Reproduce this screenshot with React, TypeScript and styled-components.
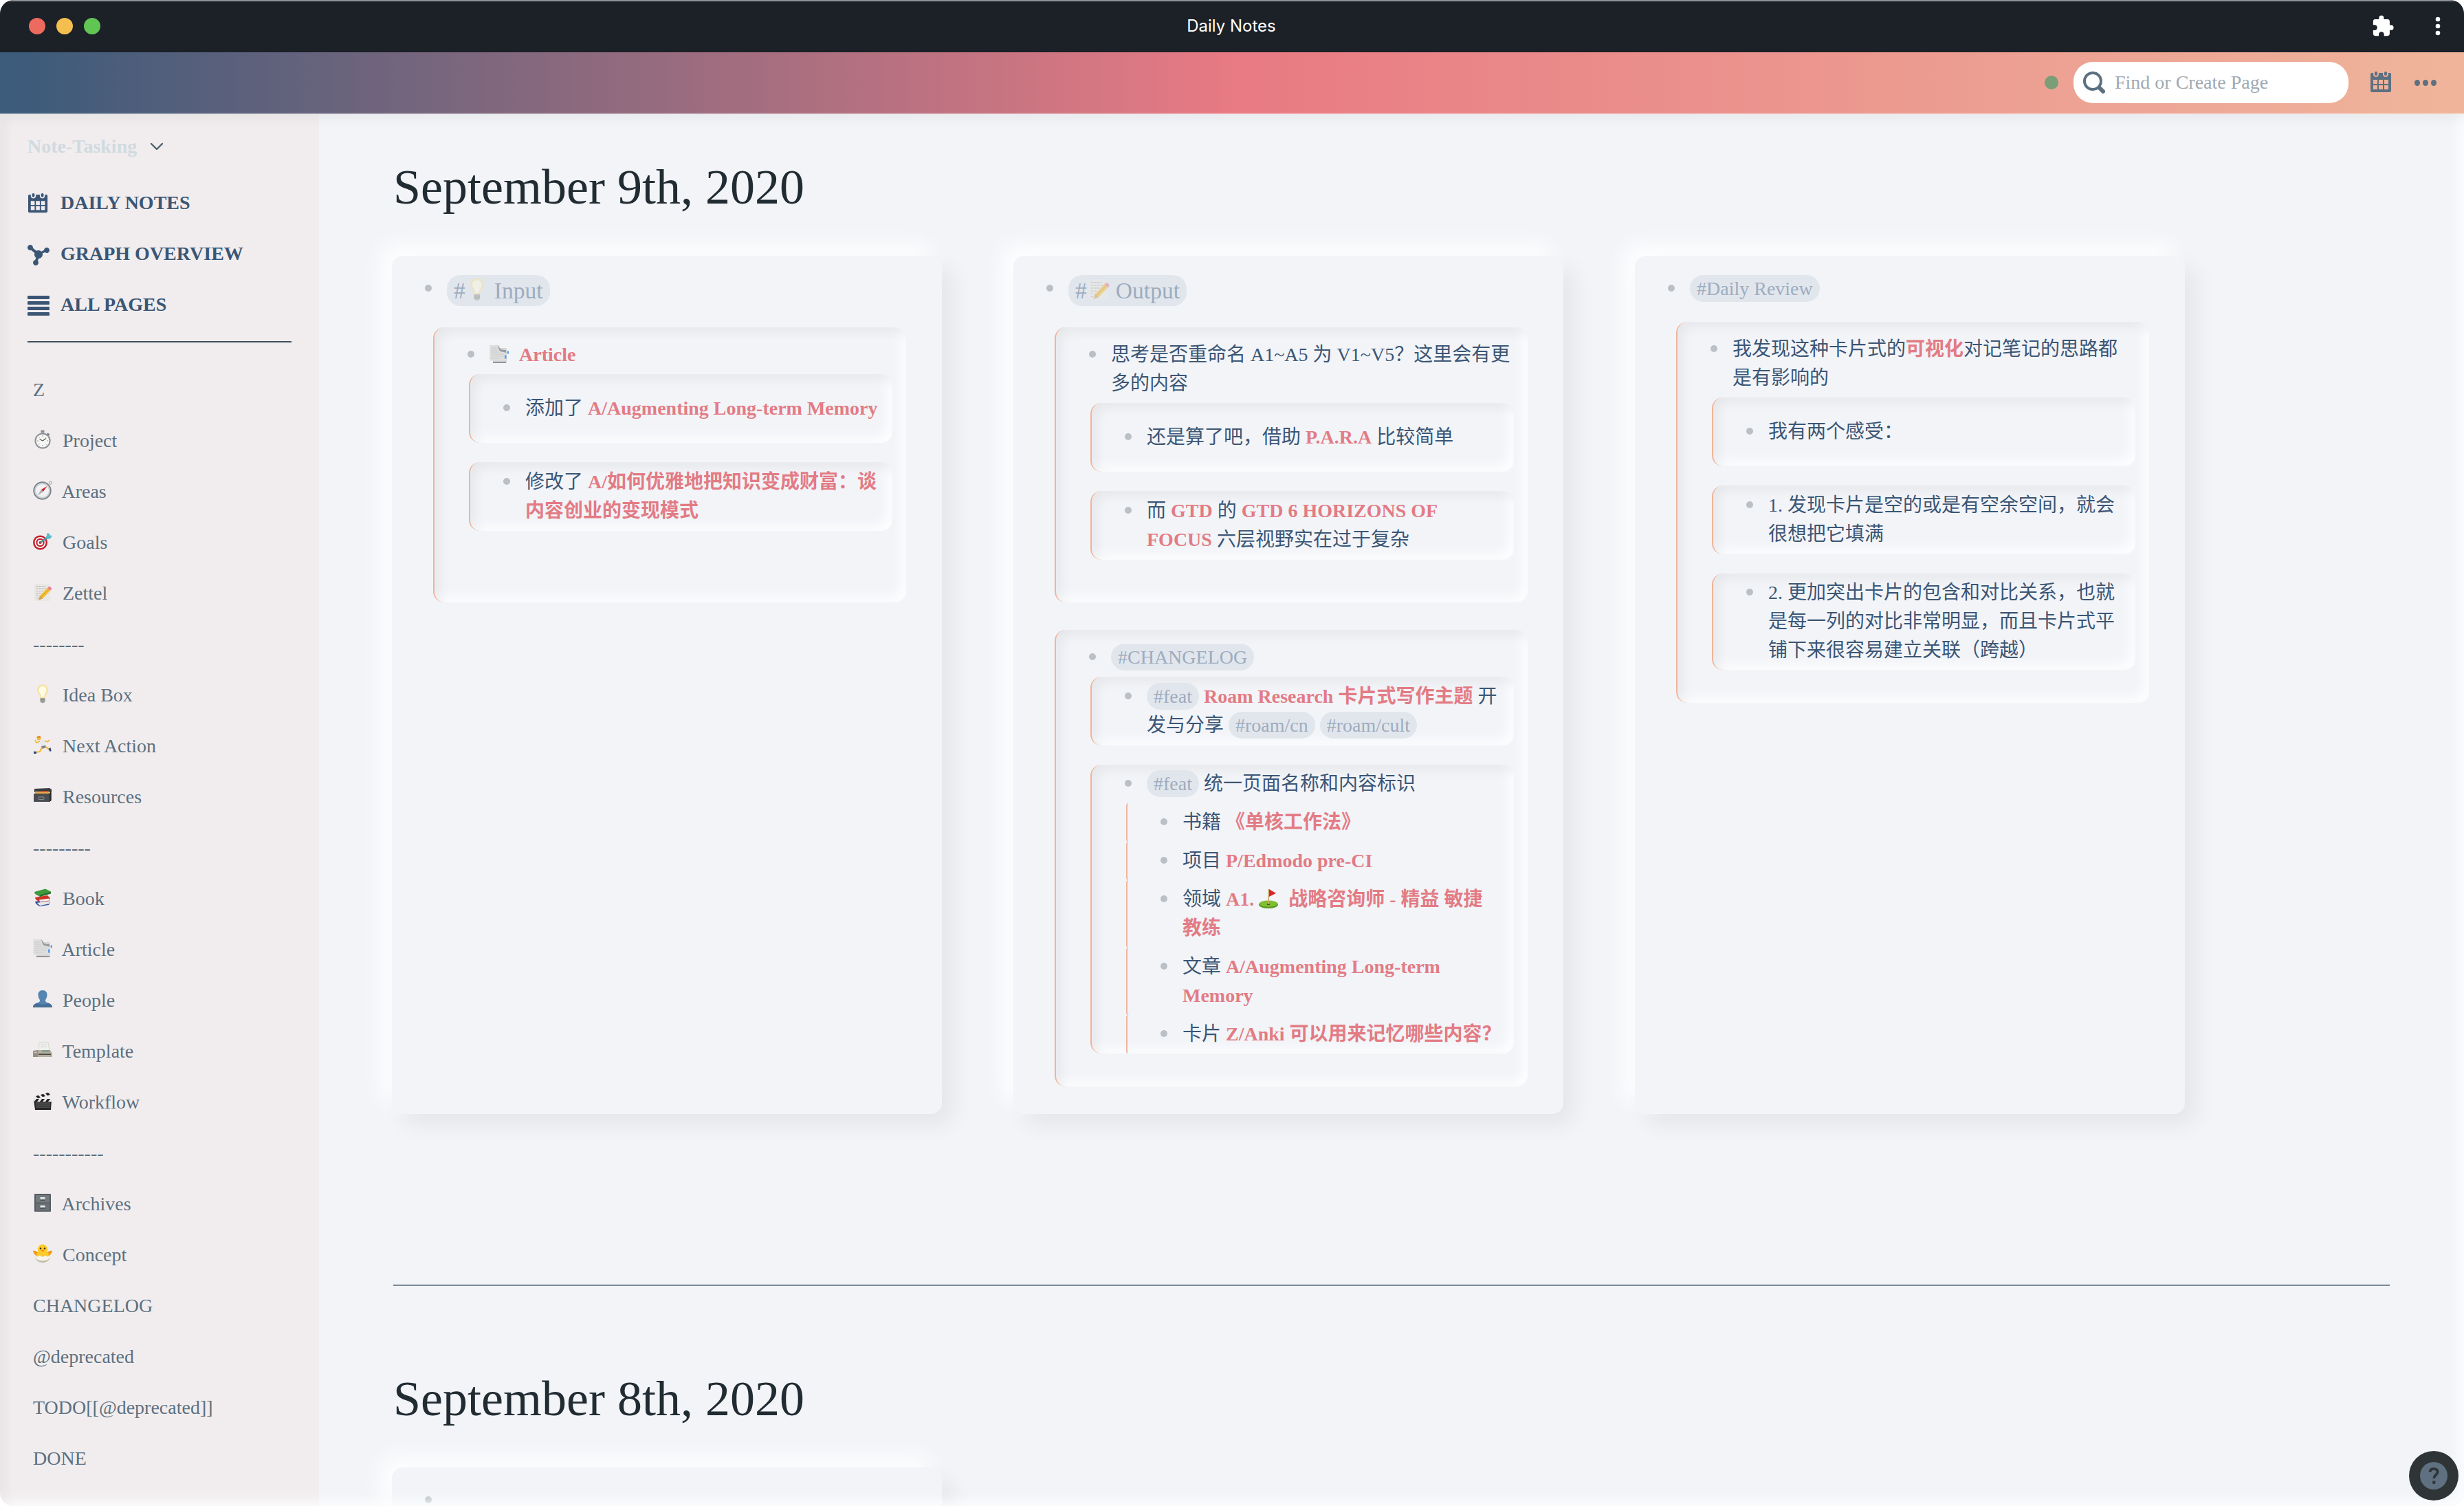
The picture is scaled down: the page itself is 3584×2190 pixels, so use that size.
import React from "react";
import styled, { createGlobalStyle, css } from "styled-components";

const c = {
  ink: "#3b5675",
  link: "#e37b84",
  muted: "#5c7080",
  bullet: "#bac0c5",
  edge: "#efb49b",
  paper: "#f2f4f8",
  side: "#f1edee",
};

const serif = `"Liberation Serif", "Noto Sans CJK SC", serif`;

const GlobalStyle = createGlobalStyle`
  *, *::before, *::after { box-sizing: border-box; }
  html, body { margin: 0; padding: 0; background: #fff; }
  body { font-family: ${serif}; font-size: 28px; line-height: 42px; color: ${c.ink}; }
`;

/* ---------- window ---------- */

const Window = styled.div`
  display: flex;
  flex-direction: column;
  width: 3584px;
  height: 2190px;
  overflow: hidden;
  border-radius: 20px;
  background: ${c.paper};
`;

const TitleBar = styled.header`
  display: grid;
  grid-template-columns: 1fr auto 1fr;
  align-items: center;
  height: 76px;
  flex: none;
  padding: 0 32px 2px 42px;
  background: #1c2027;
  border-top: 2px solid #8b9197;
  color: #fff;
`;

const Lights = styled.div`
  display: flex;
  gap: 16px;
`;

const Light = styled.span<{ $color: string }>`
  width: 24px;
  height: 24px;
  border-radius: 50%;
  background: ${(p) => p.$color};
`;

const WindowTitle = styled.div`
  font: 400 24px/32px Inter, sans-serif;
  padding-right: 12px;
`;

const WindowTools = styled.div`
  display: flex;
  justify-content: flex-end;
  align-items: center;
  gap: 57px;
`;

const TopBar = styled.div`
  display: flex;
  align-items: center;
  justify-content: flex-end;
  height: 90px;
  flex: none;
  padding: 0 40px 0 0;
  color: ${c.muted};
  background: linear-gradient(to right, #3d5b7a 0%, #3d5b7a 1%, #e87a83 50%, #efb59b 100%);
  border-bottom: 2px solid rgba(255, 255, 255, 0.35);
  background-origin: border-box;
`;

const SyncDot = styled.span`
  width: 20px;
  height: 20px;
  margin-right: 22px;
  border-radius: 50%;
  background: #7a9e77;
`;

const Search = styled.label`
  display: flex;
  align-items: center;
  width: 400px;
  height: 60px;
  margin: 0 32px 0 0;
  padding-left: 14px;
  gap: 14px;
  border-radius: 28px;
  background: #fff;
`;

const Placeholder = styled.span`
  color: #a0a9b3;
`;

const Dots = styled.div`
  display: flex;
  gap: 4px;
  margin-left: 32px;
`;

const Dot = styled.i`
  width: 8px;
  height: 9px;
  border-radius: 50%;
  background: ${c.muted};
`;

const Body = styled.div`
  position: relative;
  display: flex;
  flex: 1;
  min-height: 0;
  overflow: hidden;

  &::after {
    content: "";
    position: absolute;
    inset: 0;
    pointer-events: none;
    border-radius: 0 0 20px 20px;
    box-shadow: inset 8px 8px 16px rgba(0, 0, 0, 0.045), inset -8px -8px 16px rgba(255, 255, 255, 0.8);
  }
`;

/* ---------- sidebar ---------- */

const Sidebar = styled.nav`
  flex: none;
  width: 464px;
  padding: 26px 40px 0;
  background: ${c.side};
`;

const GraphName = styled.div`
  display: flex;
  align-items: center;
  gap: 19px;
  height: 42px;
  margin-bottom: 24px;
  font-weight: 700;
  color: #d0dae0;
`;

const NavItem = styled.a`
  display: flex;
  align-items: center;
  gap: 16px;
  height: 74px;
  font-weight: 700;
  color: ${c.ink};
`;

const NavIcon = styled.span`
  display: flex;
  justify-content: center;
  width: 32px;
  padding-top: 2px;
`;

const SideRule = styled.hr`
  height: 2px;
  margin: 16px 0 32px;
  border: 0;
  background: #3d4e5b;
`;

const PageItem = styled.a`
  display: block;
  height: 74px;
  padding-left: 8px;
  line-height: 74px;
  color: ${c.muted};
  white-space: nowrap;
`;

/* ---------- daily log ---------- */

const Main = styled.main`
  flex: 1;
  min-width: 0;
  padding: 64px 108px 0 106px;
`;

const Day = styled.section`
  display: flex;
  flex-direction: column;
`;

const DayTitle = styled.h1`
  margin: 0 0 58px;
  padding-left: 2px;
  font-weight: 400;
  font-size: 72px;
  line-height: 84px;
  color: #212b32;
`;

const Columns = styled.div`
  display: flex;
  align-items: stretch;
  gap: 104px;
`;

const DayRule = styled.hr`
  height: 2px;
  margin: 248px 0 122px 2px;
  border: 0;
  background: #7b8896;
`;

const sunken = css`
  border-left: 2px solid ${c.edge};
  border-radius: 16px;
  box-shadow: inset 8px 8px 16px rgba(0, 0, 0, 0.05), inset -8px -8px 16px rgba(255, 255, 255, 0.85);
`;

const levels = {
  1: css`
    display: flex;
    flex-direction: column;
    width: 800px;
    padding: 20px 52px 20px 60px;
    border-radius: 16px;
    background: ${c.paper};
    box-shadow: 16px 16px 32px rgba(0, 0, 0, 0.06), -16px -16px 32px rgba(255, 255, 255, 0.95);
  `,
  2: css`
    ${sunken}
    min-height: 400px;
    margin: 20px 0;
    padding: 12px 20px 20px 50px;
  `,
  3: css`
    ${sunken}
    display: flex;
    flex-direction: column;
    justify-content: center;
    min-height: 100px;
    margin-bottom: 28px;
    padding-left: 50px;
  `,
  4: css`
    border-left: 2px solid ${c.edge};
    border-radius: 4px;
  `,
};

const rowSpacing = {
  1: "margin-left: -12px; padding: 7px 0;",
  2: "margin-left: -2px; padding: 7px 0;",
  3: "margin-left: -2px; padding: 7px 16px 7px 0;",
  4: "padding: 7px 18px 7px 48px;",
};

const Block = styled.div<{ $level: 1 | 2 | 3 | 4 }>`
  ${(p) => levels[p.$level]}
`;

const Row = styled.div<{ $level: 1 | 2 | 3 | 4 }>`
  display: flex;
  align-items: flex-start;
  gap: 22px;
  ${(p) => rowSpacing[p.$level]}
`;

const Bullet = styled.span`
  flex: none;
  width: 10px;
  height: 10px;
  margin-top: 15px;
  border-radius: 50%;
  background: ${c.bullet};
`;

const Text = styled.div<{ $big?: boolean }>`
  flex: 1;
  min-width: 0;
  margin: ${(p) => (p.$big ? "-1px 0 1px" : "0")};
  font-size: ${(p) => (p.$big ? "33.6px" : "28px")};
  line-height: 1.5;
`;

const Link = styled.a`
  font-weight: 700;
  color: ${c.link};
`;

const Tag = styled.a`
  padding: 4px 10px;
  border-radius: 20px;
  background: #e1e6ed;
  color: #9eacbe;
  white-space: nowrap;
`;

const EmojiSvg = styled.svg<{ $tight?: boolean; $faded?: boolean }>`
  width: 1em;
  height: 1em;
  margin-right: ${(p) => (p.$tight ? "0" : "8px")};
  vertical-align: -0.12em;
  opacity: ${(p) => (p.$faded ? 0.5 : 1)};
`;

const HelpButton = styled.button`
  position: absolute;
  right: 8px;
  bottom: 8px;
  z-index: 1;
  display: flex;
  align-items: center;
  justify-content: center;
  width: 72px;
  height: 72px;
  padding: 0;
  border: 0;
  border-radius: 50%;
  background: #2f3437;
`;

/* ---------- drawings ---------- */

const glyphs: Record<string, React.ReactNode> = {
  stopwatch: (
    <>
      <rect x="11.5" y="0.5" width="5" height="4" rx="1" fill="#8b8f93" />
      <path d="M21.5 4.5l3 2.2-1.5 2-3-2.4z" fill="#777c80" />
      <circle cx="14" cy="16" r="11.6" fill="#8d9296" />
      <circle cx="14" cy="16" r="9.6" fill="#f6f6f4" />
      <path d="M14 8v2M14 22v2M6 16h2M20 16h2M8.4 10.4l1.2 1.2M19.6 10.4l-1.2 1.2M8.4 21.6l1.2-1.2M19.6 21.6l-1.2-1.2" stroke="#999" strokeWidth="1" />
      <path d="M14 16l-4.5-2.5M14 16l5-3.4" stroke="#555" strokeWidth="1.2" />
    </>
  ),
  compass: (
    <>
      <circle cx="25.4" cy="3.2" r="2" fill="none" stroke="#9aa0a4" strokeWidth="1" />
      <circle cx="13.5" cy="14.5" r="13.2" fill="#7d8388" />
      <circle cx="13.5" cy="14.5" r="11.4" fill="#c9ced1" />
      <circle cx="13.5" cy="14.5" r="9.6" fill="#f0f1f2" />
      <path d="M20.5 8l-8.6 5 3 3z" fill="#d8202a" />
      <path d="M6.5 21.5l5.4-8.5 3 3z" fill="#a9aeb2" />
    </>
  ),
  target: (
    <>
      <ellipse cx="10.5" cy="16" rx="10.5" ry="10.5" fill="#c3202b" />
      <ellipse cx="10.5" cy="16" rx="8" ry="8" fill="#fff" />
      <ellipse cx="10.5" cy="16" rx="6.2" ry="6.2" fill="#c3202b" />
      <ellipse cx="10.5" cy="16" rx="4" ry="4" fill="#fff" />
      <circle cx="10.5" cy="16" r="2" fill="#c3202b" />
      <path d="M11 16L22 7.5" stroke="#3f9fae" strokeWidth="2.4" />
      <path d="M19 8l2-6 3 1 .5 2.500 3.500.5-3 4.500-5 .5z" fill="#59bccb" />
    </>
  ),
  memo: (
    <>
      <path d="M2 2h23v25H2z" fill="#e9e8e4" />
      <path d="M4.500 5.500h14M4.500 9h16M4.500 12.500h12M4.500 16h8M4.500 19.500h5M4.500 23h4" stroke="#b5b5b1" strokeWidth="1.100" strokeDasharray="3 1" />
      <path d="M8 25.500l2-6L21 8l4 4-11 11.500z" fill="#f3bf35" />
      <path d="M8 25.500l2-6 4 4z" fill="#caa372" />
      <path d="M10.500 22.800L22.600 10" stroke="#d89b1e" strokeWidth="1" />
      <path d="M21 8l2-2c1-1 5 2.500 4 4l-2 2z" fill="#ef7f8c" />
    </>
  ),
  bulb: (
    <>
      <path d="M14 .5C9 .5 6 4 6 8.300c0 4.700 4 7 4.500 11.700h7c.5-4.700 4.500-7 4.500-11.700C22 4 19 .5 14 .5z" fill="#f5e3a0" />
      <path d="M14 3c-3.500 0-5.500 2.500-5.500 5.500 0 3.500 3 5.500 3.500 10h4c.5-4.500 3.500-6.500 3.500-10C19.500 5.500 17.500 3 14 3z" fill="#fffbe6" />
      <path d="M10.500 20h7v4.500c0 1.500-1.500 3-3.500 3s-3.500-1.500-3.500-3z" fill="#a7a7a3" />
      <path d="M10.500 22h7M10.500 24.200h7" stroke="#77776f" strokeWidth=".8" />
    </>
  ),
  runner: (
    <>
      <circle cx="8.500" cy="4.500" r="3" fill="#f5b93a" />
      <path d="M5.500 4c0-4 6-4 6-.5z" fill="#e08a22" />
      <path d="M9 8l8-1 2 8-6 3z" fill="#e6e9ec" />
      <path d="M10 9l-5 2-2-4M17 8l4 2 3-3" fill="none" stroke="#f5b93a" strokeWidth="1.800" />
      <path d="M12 16l6-1 2 3-7 2z" fill="#7b848d" />
      <path d="M13 18l-3 6-7 1M18 17l6 4" fill="none" stroke="#f5b93a" strokeWidth="2.200" />
      <path d="M1 23.500l4 .5v3H1zM22.500 20l3-2 1.200 5-2 1z" fill="#2b4a87" />
    </>
  ),
  cardbox: (
    <>
      <path d="M2 4l22-1 3 2v4H2z" fill="#3a3c3e" />
      <path d="M3 8h21v4H3z" fill="#e9a84a" />
      <path d="M14 7h8v2h-8z" fill="#d9542e" />
      <path d="M1 11h23l2.500-4v14L24 23H1z" fill="#4a4d50" />
      <path d="M24 11l2.500-4v14L24 23z" fill="#25272a" />
      <rect x="8" y="16" width="8" height="3.500" rx=".6" fill="none" stroke="#8d9195" strokeWidth="1" />
    </>
  ),
  books: (
    <>
      <path d="M3 20l18-3 4 4-2 4-14 2-5-4z" fill="#3556a5" />
      <path d="M6 22l18-3v4L10 26z" fill="#e8e8e8" />
      <path d="M3 14l18-3 4 4-1 4-14 2-6-4z" fill="#cf3325" />
      <path d="M9 17.500l15-2v3L10 20.500z" fill="#f1f1ee" />
      <path d="M2 6l16-4.500 8 4v2.500L10 13l-7-4z" fill="#3f9a3c" />
      <path d="M10 10.500l16-4.500v2.500L10 13z" fill="#2c6e2b" />
    </>
  ),
  article: (
    <>
      <path d="M5 5h20v21.500H5z" fill="#d4d6d7" />
      <path d="M.5 1H11c3 1 3 6 6 7l7 1v14.500H.5z" fill="#dedede" />
      <path d="M11 1c4 1 3 5.500 7 6.500 2 .5 4 .5 6 .5v4c-3-1.500-6-1-8-2-3.500-2-2-7-5-9z" fill="#9a9da0" />
      <path d="M2.500 5h8M2.500 8h9M2.500 11h10M2.500 14h18M2.500 17h18M2.500 20h12" stroke="#c8c9c9" strokeWidth=".9" />
      <path d="M5 25.200h19v1.600H5z" fill="#808385" />
      <path d="M25.700 9.500H28v4h-2.300zM22 15.500h2.600v5H22z" fill="#5b9ded" />
    </>
  ),
  person: (
    <>
      <path d="M14 1c4.500 0 7 3.200 6.500 7.500-.4 4-2 5.500-2.500 7 0 2.500 1 3 4 4s6 2.500 6 6.500H0c0-4 3-5.500 6-6.500s4-1.500 4-4c-.5-1.500-2.100-3-2.500-7C7 4.200 9.500 1 14 1z" fill="#5585b0" />
      <path d="M0 26c0-4 3-5.500 6-6.500 4 3 12 3 16 0 3 1 6 2.500 6 6.500z" fill="#456f97" />
    </>
  ),
  fax: (
    <>
      <path d="M9 3h13l2 13H8z" fill="#f0f0ee" stroke="#cfcec9" strokeWidth=".8" />
      <path d="M11 6h9M11 9h9" stroke="#d4d4d1" strokeWidth="1" />
      <path d="M7 14h18l3 5v5H6z" fill="#b5ae9f" />
      <path d="M0 15l7-1v10H0z" fill="#958f82" />
      <path d="M1.500 17.500h4" stroke="#d4d0c6" strokeWidth="1.500" />
      <path d="M13 14.500h11v1.500H13z" fill="#5f8d7a" />
      <path d="M8 19.500h18v1.300H8z" fill="#2f2f2d" />
    </>
  ),
  clapper: (
    <>
      <path d="M1 12h26l-1 15H3z" fill="#262626" />
      <path d="M4 17h21M4 20h21M4 23h21" stroke="#7d7d7d" strokeWidth=".9" />
      <path d="M0 8L25 1l1.200 4L1 12z" fill="#e9e9e9" />
      <path d="M4 7l4-1.200 3 3.200-4 1.200zM11 5l4-1.200L18 7l-4 1.200zM18 3l4-1.200 3 3.300-4 1.200z" fill="#222" />
      <path d="M1 11h27v4H2z" fill="#e9e9e9" />
      <path d="M5 11h4l-3 4H2zM13 11h4l-3 4h-4zM21 11h4l-3 4h-4z" fill="#222" />
    </>
  ),
  cabinet: (
    <>
      <rect x="2" y="1" width="24" height="26" rx="1" fill="#565c60" />
      <rect x="4" y="3" width="20" height="10.500" fill="#747b80" />
      <rect x="4" y="15" width="20" height="10.500" fill="#6a7176" />
      <rect x="10.500" y="6" width="7" height="2.600" fill="#ececec" />
      <rect x="10.500" y="18" width="7" height="2.600" fill="#ececec" />
      <path d="M10.500 10.500h7M10.500 22.500h7" stroke="#4a4f53" strokeWidth="1" />
    </>
  ),
  chick: (
    <>
      <path d="M0 10c3-1 6 1 8 3h12c2-2 5-4 8-3-.5 3.500-3 6.500-6 7.500H6C3 16.500.5 13.500 0 10z" fill="#f49a16" />
      <circle cx="14" cy="7.800" r="7.300" fill="#fccb2b" />
      <ellipse cx="14" cy="15.500" rx="9" ry="5" fill="#fccb2b" />
      <circle cx="11" cy="6.500" r="1.200" fill="#3c2a14" />
      <circle cx="17" cy="6.500" r="1.200" fill="#3c2a14" />
      <path d="M11.800 8.700h4.400L14 11.400z" fill="#e57a12" />
      <path d="M3 16.500l4 2 3-2 4 2.500 4-2.500 3 2 4-2c0 6-4 10.500-11 10.500S3 22.500 3 16.500z" fill="#bfb9a8" />
      <path d="M3 16.500l4 2 3-2 4 2.500 4-2.500 3 2 4-2c0 4.500-4 8-11 8s-11-3.500-11-8z" fill="#f7f4ea" />
    </>
  ),
  golf: (
    <>
      <ellipse cx="14" cy="22.500" rx="14" ry="5.500" fill="#5c9c1f" />
      <ellipse cx="14" cy="21" rx="13" ry="4.500" fill="#7fbf30" />
      <ellipse cx="14" cy="22" rx="2.500" ry="1" fill="#2d5210" />
      <path d="M13.500 0h1.600v22h-1.600z" fill="#c9a869" />
      <path d="M15 0l10 6-10 5z" fill="#d9262c" />
    </>
  ),
};

const Emoji = ({ name, tight, faded }: { name: string; tight?: boolean; faded?: boolean }) => (
  <EmojiSvg viewBox="0 0 28 28" $tight={tight} $faded={faded} aria-hidden>
    {glyphs[name]}
  </EmojiSvg>
);

const iconPaths = {
  calendar:
    "M11 3c.6 0 1-.5 1-1V1c0-.6-.4-1-1-1s-1 .4-1 1v1c0 .5.4 1 1 1zm3-2h-1v1c0 1.100-.9 2-2 2s-2-.9-2-2V1H6v1c0 1.100-.9 2-2 2s-2-.9-2-2V1H1c-.6 0-1 .5-1 1v12c0 .6.4 1 1 1h13c.6 0 1-.4 1-1V2c0-.6-.4-1-1-1zM5 13H2v-3h3v3zm0-4H2V6h3v3zm4 4H6v-3h3v3zm0-4H6V6h3v3zm4 4h-3v-3h3v3zm0-4h-3V6h3v3zM4 3c.6 0 1-.5 1-1V1c0-.6-.4-1-1-1S3 .4 3 1v1c0 .5.4 1 1 1z",
  graph:
    "M14 3c-1.060 0-1.920.83-1.990 1.880l-1.930.97A2.950 2.950 0 008 5c-.56 0-1.080.16-1.520.43L3.970 3.340C3.980 3.230 4 3.120 4 3c0-1.100-.9-2-2-2s-2 .9-2 2 .9 2 2 2c.24 0 .47-.05.68-.13l2.510 2.090C5.080 7.290 5 7.630 5 8c0 .96.46 1.810 1.160 2.350l-.56 1.690c-.91.19-1.600.99-1.600 1.960 0 1.100.9 2 2 2s2-.9 2-2c0-.51-.2-.97-.51-1.320l.56-1.690C9.680 10.950 11 9.630 11 8c0-.24-.04-.48-.1-.7l1.930-.97c.34.41.86.67 1.170.67 1.100 0 2-.9 2-2s-.9-2-2-2z",
  list: "M.6 1h14.800a.6.6 0 01.6.6v1.300a.6.6 0 01-.6.6H.6a.6.6 0 01-.6-.6V1.600A.6.6 0 01.6 1zm0 4h14.800a.6.6 0 01.6.6v1.300a.6.6 0 01-.6.6H.6a.6.6 0 01-.6-.6V5.600A.6.6 0 01.6 5zm0 4h14.800a.6.6 0 01.6.6v1.300a.6.6 0 01-.6.6H.6a.6.6 0 01-.6-.6V9.600A.6.6 0 01.6 9zm0 4h14.800a.6.6 0 01.6.6v1.300a.6.6 0 01-.6.6H.6a.6.6 0 01-.6-.6v-1.300A.6.6 0 01.6 13z",
  search:
    "M15.550 13.430l-2.670-2.680a6.940 6.940 0 001.110-3.760c0-3.870-3.130-7-7-7s-7 3.130-7 7 3.130 7 7 7c1.390 0 2.670-.42 3.760-1.110l2.680 2.670a1.498 1.498 0 102.120-2.120zm-8.560-1.440c-2.760 0-5-2.240-5-5s2.240-5 5-5 5 2.240 5 5-2.240 5-5 5z",
};

const Icon = ({ name, size = 32 }: { name: keyof typeof iconPaths; size?: number }) => (
  <svg width={size} height={size} viewBox="0 0 16 16" fill="currentColor" fillRule="evenodd" aria-hidden>
    <path d={iconPaths[name]} />
  </svg>
);

/* ---------- content ---------- */

type Level = 1 | 2 | 3 | 4;
type Node = { text: React.ReactNode; big?: boolean; children?: Node[] };

const columns: Node[] = [
  {
    big: true,
    text: <Tag>#<Emoji name="bulb" tight faded /> Input</Tag>,
    children: [
      {
        text: <><Emoji name="article" /> <Link>Article</Link></>,
        children: [
          { text: <>添加了 <Link>A/Augmenting Long-term Memory</Link></> },
          { text: <>修改了 <Link>A/如何优雅地把知识变成财富：谈内容创业的变现模式</Link></> },
        ],
      },
    ],
  },
  {
    big: true,
    text: <Tag>#<Emoji name="memo" tight faded /> Output</Tag>,
    children: [
      {
        text: <>思考是否重命名 A1~A5 为 V1~V5？这里会有更多的内容</>,
        children: [
          { text: <>还是算了吧，借助 <Link>P.A.R.A</Link> 比较简单</> },
          { text: <>而 <Link>GTD</Link> 的 <Link>GTD 6 HORIZONS OF FOCUS</Link> 六层视野实在过于复杂</> },
        ],
      },
      {
        text: <Tag>#CHANGELOG</Tag>,
        children: [
          {
            text: (
              <>
                <Tag>#feat</Tag> <Link>Roam Research 卡片式写作主题</Link> 开发与分享 <Tag>#roam/cn</Tag> <Tag>#roam/cult</Tag>
              </>
            ),
          },
          {
            text: <><Tag>#feat</Tag> 统一页面名称和内容标识</>,
            children: [
              { text: <>书籍 <Link>《单核工作法》</Link></> },
              { text: <>项目 <Link>P/Edmodo pre-CI</Link></> },
              { text: <>领域 <Link>A1. <Emoji name="golf" /> 战略咨询师 - 精益 敏捷教练</Link></> },
              { text: <>文章 <Link>A/Augmenting Long-term Memory</Link></> },
              { text: <>卡片 <Link>Z/Anki 可以用来记忆哪些内容？</Link></> },
            ],
          },
        ],
      },
    ],
  },
  {
    text: <Tag>#Daily Review</Tag>,
    children: [
      {
        text: <>我发现这种卡片式的<Link>可视化</Link>对记笔记的思路都是有影响的</>,
        children: [
          { text: "我有两个感受：" },
          { text: "1. 发现卡片是空的或是有空余空间，就会很想把它填满" },
          { text: "2. 更加突出卡片的包含和对比关系，也就是每一列的对比非常明显，而且卡片式平铺下来很容易建立关联（跨越）" },
        ],
      },
    ],
  },
];

const Outline = ({ node, level }: { node: Node; level: Level }) => (
  <Block $level={level}>
    <Row $level={level}>
      <Bullet />
      <Text $big={node.big}>{node.text}</Text>
    </Row>
    {node.children?.map((child, i) => (
      <Outline key={i} node={child} level={(level + 1) as Level} />
    ))}
  </Block>
);

const pages: { label: string; emoji?: string }[] = [
  { label: "Z" },
  { label: "Project", emoji: "stopwatch" },
  { label: "Areas", emoji: "compass" },
  { label: "Goals", emoji: "target" },
  { label: "Zettel", emoji: "memo" },
  { label: "--------" },
  { label: "Idea Box", emoji: "bulb" },
  { label: "Next Action", emoji: "runner" },
  { label: "Resources", emoji: "cardbox" },
  { label: "---------" },
  { label: "Book", emoji: "books" },
  { label: "Article", emoji: "article" },
  { label: "People", emoji: "person" },
  { label: "Template", emoji: "fax" },
  { label: "Workflow", emoji: "clapper" },
  { label: "-----------" },
  { label: "Archives", emoji: "cabinet" },
  { label: "Concept", emoji: "chick" },
  { label: "CHANGELOG" },
  { label: "@deprecated" },
  { label: "TODO[[@deprecated]]" },
  { label: "DONE" },
];

export default function App() {
  return (
    <>
      <GlobalStyle />
      <Window>
        <TitleBar>
          <Lights>
            <Light $color="#ed6a5e" />
            <Light $color="#f5bf4f" />
            <Light $color="#61c554" />
          </Lights>
          <WindowTitle>Daily Notes</WindowTitle>
          <WindowTools>
            <svg width="34" height="34" viewBox="0 0 24 24" fill="#fff" aria-hidden>
              <path d="M20.500 11H19V7c0-1.100-.9-2-2-2h-4V3.500a2.500 2.500 0 00-5 0V5H4c-1.100 0-1.990.9-1.990 2v3.800H3.500c1.490 0 2.700 1.210 2.700 2.700s-1.210 2.700-2.700 2.700H2V20c0 1.100.9 2 2 2h3.800v-1.500c0-1.490 1.210-2.700 2.700-2.700s2.700 1.210 2.700 2.700V22H17c1.100 0 2-.9 2-2v-4h1.500a2.500 2.500 0 000-5z" />
            </svg>
            <svg width="12" height="30" viewBox="0 0 12 30" fill="#fff" aria-hidden>
              <circle cx="6" cy="5" r="3.300" />
              <circle cx="6" cy="15" r="3.300" />
              <circle cx="6" cy="25" r="3.300" />
            </svg>
          </WindowTools>
        </TitleBar>
        <TopBar>
          <SyncDot />
          <Search>
            <Icon name="search" />
            <Placeholder>Find or Create Page</Placeholder>
          </Search>
          <Icon name="calendar" />
          <Dots>
            <Dot />
            <Dot />
            <Dot />
          </Dots>
        </TopBar>
        <Body>
          <Sidebar>
            <GraphName>
              Note-Tasking
              <svg width="20" height="12" viewBox="0 0 20 12" fill="none" stroke="#4f5f6c" strokeWidth="2.400" strokeLinecap="round" strokeLinejoin="round" aria-hidden>
                <path d="M2 2l8 8 8-8" />
              </svg>
            </GraphName>
            <NavItem><NavIcon><Icon name="calendar" size={30} /></NavIcon>DAILY NOTES</NavItem>
            <NavItem><NavIcon><Icon name="graph" /></NavIcon>GRAPH OVERVIEW</NavItem>
            <NavItem><NavIcon><Icon name="list" /></NavIcon>ALL PAGES</NavItem>
            <SideRule />
            {pages.map((p) => (
              <PageItem key={p.label}>
                {p.emoji && <><Emoji name={p.emoji} /> </>}
                {p.label}
              </PageItem>
            ))}
          </Sidebar>
          <Main>
            <Day>
              <DayTitle>September 9th, 2020</DayTitle>
              <Columns>
                {columns.map((n, i) => (
                  <Outline key={i} node={n} level={1} />
                ))}
              </Columns>
            </Day>
            <DayRule />
            <Day>
              <DayTitle>September 8th, 2020</DayTitle>
              <Columns>
                <Outline node={{ text: "" }} level={1} />
              </Columns>
            </Day>
          </Main>
          <HelpButton aria-label="Help">
            <svg width="40" height="40" viewBox="0 0 40 40" aria-hidden>
              <circle cx="20" cy="20" r="20" fill="#5f7080" />
              <path d="M14.500 14.500c.3-3.200 2.600-4.700 5.600-4.700 3.200 0 5.500 1.700 5.500 4.700 0 4.300-5.300 4.300-5.300 9.300" fill="none" stroke="#2f3437" strokeWidth="3.800" />
              <rect x="18.300" y="27.500" width="4" height="4.300" fill="#2f3437" />
            </svg>
          </HelpButton>
        </Body>
      </Window>
    </>
  );
}
